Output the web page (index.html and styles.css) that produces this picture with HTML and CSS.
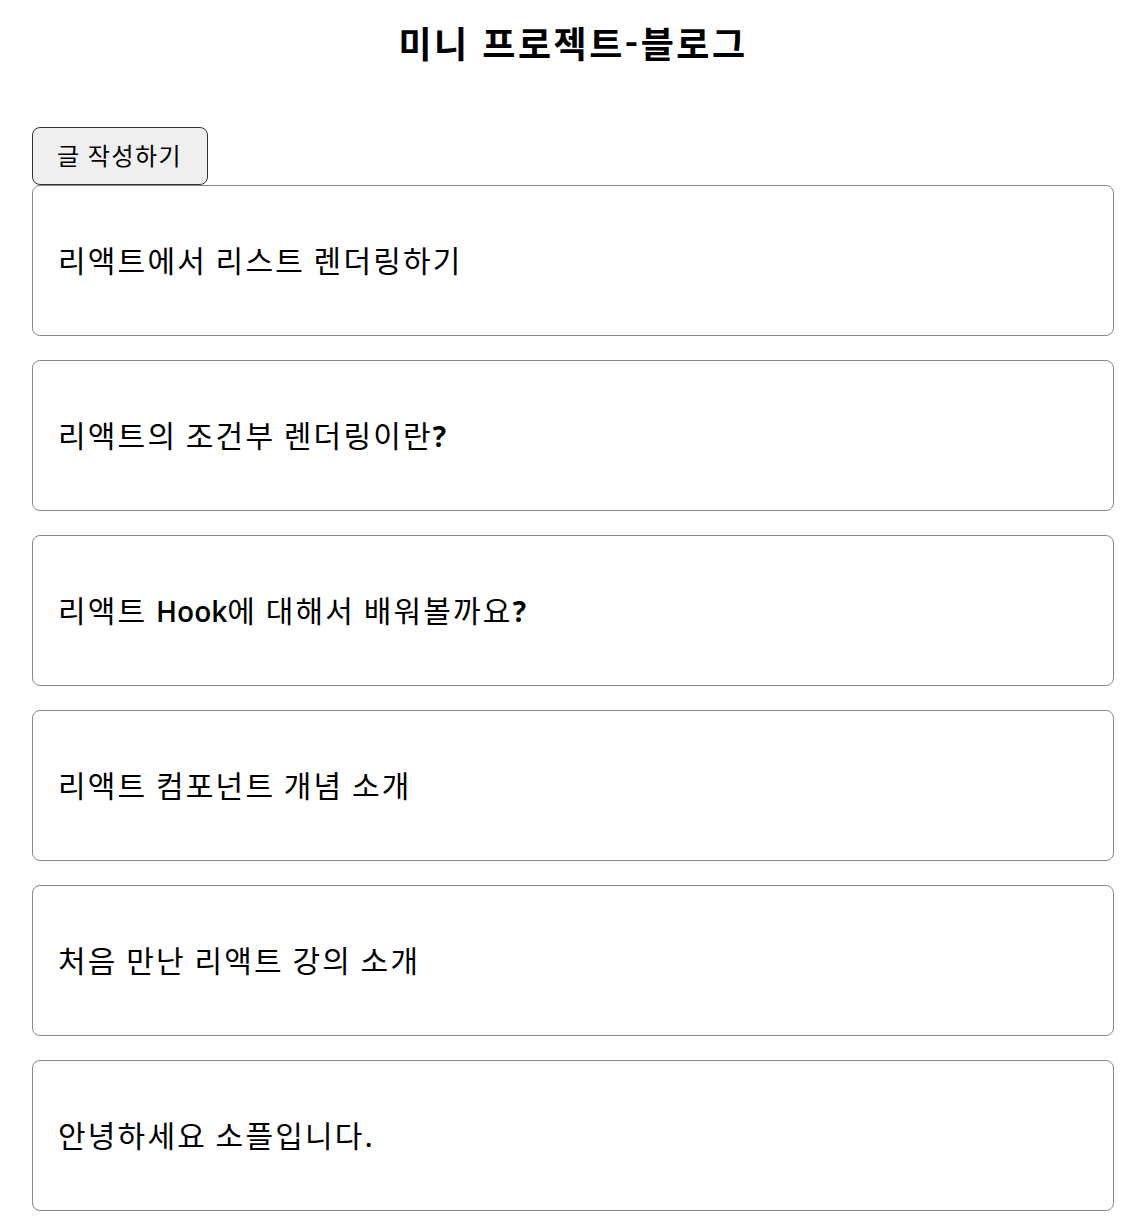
FILE: index.html
```html
<!DOCTYPE html>
<html lang="ko">
<head>
<meta charset="utf-8">
<link rel="stylesheet" href="styles.css">
</head>
<body>
<div class="page">
  <h1 class="title">미니 프로젝트-블로그</h1>
  <div class="actions">
    <button class="write-btn">글 작성하기</button>
  </div>
  <ul class="post-list">
    <li class="post-card"><span class="post-title">리액트에서 리스트 렌더링하기</span></li>
    <li class="post-card"><span class="post-title">리액트의 조건부 렌더링이란<b class="mark">?</b></span></li>
    <li class="post-card"><span class="post-title">리액트 <span class="latin">Hook</span>에 대해서 배워볼까요<b class="mark">?</b></span></li>
    <li class="post-card"><span class="post-title">리액트 컴포넌트 개념 소개</span></li>
    <li class="post-card"><span class="post-title">처음 만난 리액트 강의 소개</span></li>
    <li class="post-card"><span class="post-title">안녕하세요 소플입니다.</span></li>
  </ul>
</div>
</body>
</html>
```

FILE: styles.css
```css
html, body {
  margin: 0;
  padding: 0;
  background: #ffffff;
}
body {
  font-family: "Noto Sans CJK KR", "Noto Sans", sans-serif;
  color: #000;
}
.page {
  margin: 0 16px 0 32px;
  display: flex;
  flex-direction: column;
}
.title {
  margin: 0;
  height: 84px;
  display: flex;
  align-items: center;
  justify-content: center;
  font-size: 36px;
  font-weight: 700;
  letter-spacing: 2.5px;
}
.actions {
  margin-top: 43px;
  display: flex;
}
.write-btn {
  font-family: "Noto Sans CJK KR", "Noto Sans", sans-serif;
  font-size: 24px;
  letter-spacing: 1.5px;
  word-spacing: -1px;
  white-space: nowrap;
  height: 58px;
  width: 176px;
  padding: 0 0 2px 24px;
  margin: 0;
  background: #efefef;
  border: 1px solid #333;
  border-radius: 8px;
  color: #000;
  line-height: 1;
  text-align: left;
  box-sizing: border-box;
}
.post-list {
  list-style: none;
  margin: 0;
  padding: 0;
  display: flex;
  flex-direction: column;
  gap: 24px;
}
.post-card {
  box-sizing: border-box;
  height: 151px;
  border: 1px solid #888;
  border-radius: 8px;
  padding: 0 25px 4px;
  display: flex;
  align-items: center;
  font-size: 30px;
}
.post-title {
  letter-spacing: 2.2px;
  word-spacing: -2px;
  white-space: pre;
}
.latin {
  font-family: "Open Sans", "Noto Sans", sans-serif;
  font-weight: 600;
  font-size: 28px;
  letter-spacing: 0;
}
.mark {
  font-family: "Open Sans", "Noto Sans", sans-serif;
  font-weight: 700;
  font-size: 28px;
  letter-spacing: 0;
}
```
